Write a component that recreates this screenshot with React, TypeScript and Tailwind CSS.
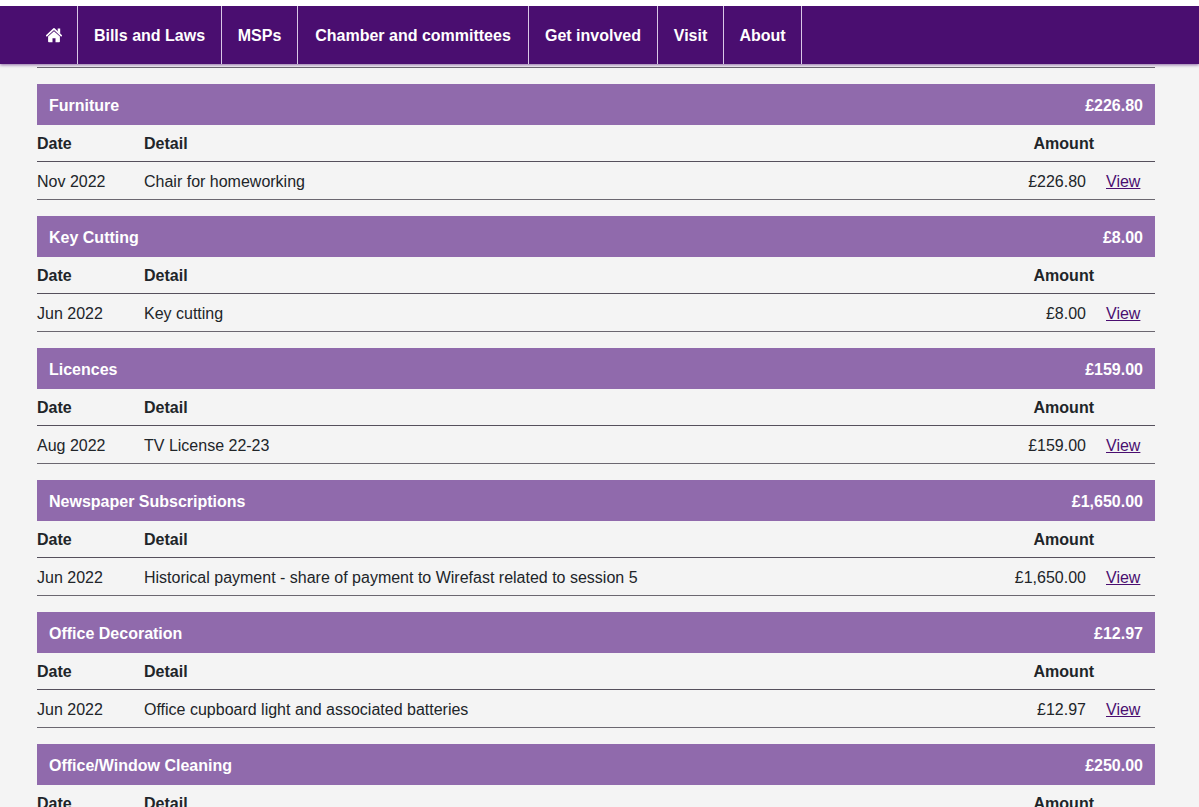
interface Expense {
  date: string;
  detail: string;
  amount: string;
}

interface Category {
  title: string;
  total: string;
  items: Expense[];
}

const menu = [
  { label: 'Bills and Laws', width: 'w-36' },
  { label: 'MSPs', width: 'w-[76px]' },
  { label: 'Chamber and committees', width: 'w-[231px]' },
  { label: 'Get involved', width: 'w-[129px]' },
  { label: 'Visit', width: 'w-[66px]' },
  { label: 'About', width: 'w-[78px]' },
];

const categories: Category[] = [
  {
    title: 'Furniture',
    total: '£226.80',
    items: [
      { date: 'Nov 2022', detail: 'Chair for homeworking', amount: '£226.80' },
    ],
  },
  {
    title: 'Key Cutting',
    total: '£8.00',
    items: [{ date: 'Jun 2022', detail: 'Key cutting', amount: '£8.00' }],
  },
  {
    title: 'Licences',
    total: '£159.00',
    items: [
      { date: 'Aug 2022', detail: 'TV License 22-23', amount: '£159.00' },
    ],
  },
  {
    title: 'Newspaper Subscriptions',
    total: '£1,650.00',
    items: [
      {
        date: 'Jun 2022',
        detail:
          'Historical payment - share of payment to Wirefast related to session 5',
        amount: '£1,650.00',
      },
    ],
  },
  {
    title: 'Office Decoration',
    total: '£12.97',
    items: [
      {
        date: 'Jun 2022',
        detail: 'Office cupboard light and associated batteries',
        amount: '£12.97',
      },
    ],
  },
  {
    title: 'Office/Window Cleaning',
    total: '£250.00',
    items: [],
  },
];

const HomeIcon = () => (
  <svg width="16" height="16" viewBox="0 0 16 16" fill="none" aria-hidden="true">
    <path
      d="M0.8 8.6 8 1.9l7.2 6.7"
      stroke="currentColor"
      strokeWidth="1.7"
      strokeLinejoin="round"
      strokeLinecap="round"
    />
    <path d="M11.7 1.4h2.5v5.4l-2.5-2.3z" fill="currentColor" />
    <path
      d="M8 4.2 2.1 9.6v4.9c0 .5.3.8.8.8h3.6v-4.1h3v4.1h3.6c.5 0 .8-.3.8-.8V9.6z"
      fill="currentColor"
    />
  </svg>
);

const NavBar = () => {
  return (
    <nav className="relative shrink-0 border-t-6 border-white bg-[#4a0e70] shadow-[0_1px_3px_rgba(74,14,112,0.6)]">
      <ul className="flex h-[58px] font-bold text-white">
        <li className="w-[78px] border-r border-[#d9c8e6]">
          <a
            href="#"
            aria-label="Home"
            className="flex h-full items-center justify-end pr-[15px]"
          >
            <HomeIcon />
          </a>
        </li>
        {menu.map((item) => (
          <li
            key={item.label}
            className={`${item.width} border-r border-[#d9c8e6]`}
          >
            <a
              href="#"
              className="flex h-full items-center justify-center pt-0.5"
            >
              {item.label}
            </a>
          </li>
        ))}
      </ul>
    </nav>
  );
};

const CategorySection = ({ title, total, items }: Category) => {
  return (
    <section>
      <div className="flex h-[41px] items-center justify-between bg-[#906aac] px-3 pt-0.5 font-bold text-white">
        <h2>{title}</h2>
        <p>{total}</p>
      </div>
      <table className="w-full table-fixed border-separate border-spacing-0">
        <thead>
          <tr className="h-[37px] text-left">
            <th className="w-[107px] border-b border-[#55505c] pt-0.5">Date</th>
            <th className="border-b border-[#55505c] pt-0.5">Detail</th>
            <th className="w-28 border-b border-[#55505c] pt-0.5 text-right">
              Amount
            </th>
            <td className="w-[61px] border-b border-[#55505c]"></td>
          </tr>
        </thead>
        <tbody>
          {items.map((item, index) => (
            <tr key={index} className="h-[38px]">
              <td className="border-b border-[#6b6770] pt-0.5">{item.date}</td>
              <td className="border-b border-[#6b6770] pt-0.5">
                {item.detail}
              </td>
              <td className="border-b border-[#6b6770] pt-0.5 pr-2 text-right">
                {item.amount}
              </td>
              <td className="border-b border-[#6b6770] pt-0.5 pl-3">
                <a href="#" className="text-[#4a0e70] underline">
                  View
                </a>
              </td>
            </tr>
          ))}
        </tbody>
      </table>
    </section>
  );
};

const App = () => {
  return (
    <div className="flex h-screen flex-col overflow-hidden bg-[#f4f4f4] font-['Liberation_Sans',Arial,sans-serif] text-base text-[#212529]">
      <NavBar />
      <main className="flex min-h-0 flex-1 flex-col gap-4 overflow-hidden pl-[37px] pr-11">
        <div className="h-1 shrink-0 border-b border-[#6b6770]" />
        {categories.map((category) => (
          <CategorySection key={category.title} {...category} />
        ))}
      </main>
    </div>
  );
};

export default App;
